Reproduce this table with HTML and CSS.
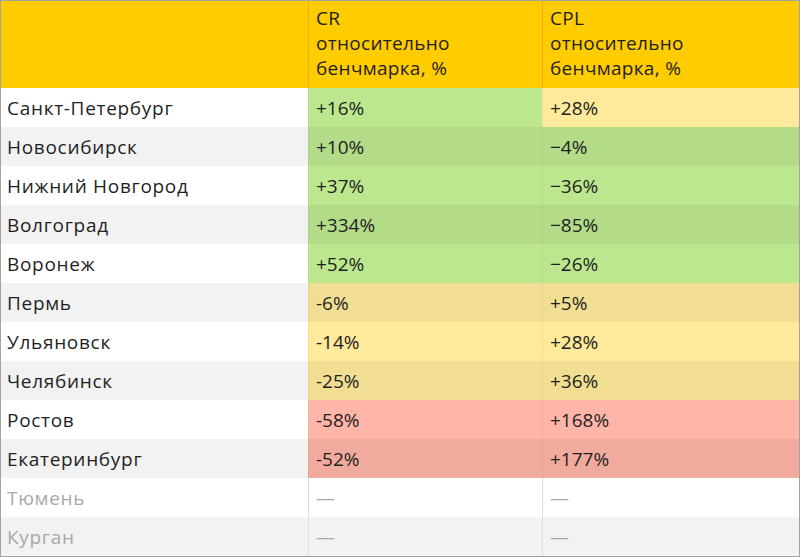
FILE: index.html
```html
<!DOCTYPE html>
<html lang="ru">
<head>
<meta charset="utf-8">
<link rel="stylesheet" href="styles.css">
</head>
<body>
<div class="frame">
  <div class="grid">
    <div class="cell head first"></div>
    <div class="cell head">CR<br>относительно<br>бенчмарка, %</div>
    <div class="cell head">CPL<br>относительно<br>бенчмарка, %</div>

    <div class="cell name">Санкт-Петербург</div>
    <div class="cell val green">+16%</div>
    <div class="cell val yellow">+28%</div>

    <div class="cell name alt">Новосибирск</div>
    <div class="cell val green alt">+10%</div>
    <div class="cell val green alt">−4%</div>

    <div class="cell name">Нижний Новгород</div>
    <div class="cell val green">+37%</div>
    <div class="cell val green">−36%</div>

    <div class="cell name alt">Волгоград</div>
    <div class="cell val green alt">+334%</div>
    <div class="cell val green alt">−85%</div>

    <div class="cell name">Воронеж</div>
    <div class="cell val green">+52%</div>
    <div class="cell val green">−26%</div>

    <div class="cell name alt">Пермь</div>
    <div class="cell val yellow alt">-6%</div>
    <div class="cell val yellow alt">+5%</div>

    <div class="cell name">Ульяновск</div>
    <div class="cell val yellow">-14%</div>
    <div class="cell val yellow">+28%</div>

    <div class="cell name alt">Челябинск</div>
    <div class="cell val yellow alt">-25%</div>
    <div class="cell val yellow alt">+36%</div>

    <div class="cell name">Ростов</div>
    <div class="cell val red">-58%</div>
    <div class="cell val red">+168%</div>

    <div class="cell name alt">Екатеринбург</div>
    <div class="cell val red alt">-52%</div>
    <div class="cell val red alt">+177%</div>

    <div class="cell name muted">Тюмень</div>
    <div class="cell val empty">—</div>
    <div class="cell val empty">—</div>

    <div class="cell name muted alt">Курган</div>
    <div class="cell val empty alt">—</div>
    <div class="cell val empty alt">—</div>
  </div>
</div>
</body>
</html>
```

FILE: styles.css
```css
html, body {
  margin: 0;
  padding: 0;
  background: #ffffff;
}

.frame {
  box-sizing: border-box;
  width: 800px;
  height: 557px;
  border: 1px solid #a3a3a3;
  font-family: "Open Sans", "Noto Sans", sans-serif;
  font-size: 19px;
  color: #1f1f1f;
}

.grid {
  display: grid;
  grid-template-columns: 307px 234px 257px;
  grid-template-rows: 87px repeat(12, 39px);
}

.cell {
  box-sizing: border-box;
  display: flex;
  align-items: center;
  padding-left: 7px;
  white-space: nowrap;
  background: #ffffff;
}

.cell.head {
  background: #ffcc00;
  display: block;
  padding-top: 5px;
  line-height: 25px;
  letter-spacing: 0.3px;
  border-left: 1px solid #e3b600;
}

.cell.head.first {
  border-left: none;
}

.cell.name {
  padding-left: 6px;
  letter-spacing: 0.7px;
}

.cell.val {
  border-left: 1px solid rgba(0, 0, 0, 0.04);
}

.cell.alt {
  background: #f2f2f2;
}

.cell.muted {
  color: #a8a8a8;
}

.cell.empty {
  color: #a8a8a8;
  border-left: 1px solid #dedede;
}

.cell.green { background: #bce78f; }
.cell.green.alt { background: #b3db88; }
.cell.yellow { background: #ffe99a; }
.cell.yellow.alt { background: #f2de93; }
.cell.red { background: #ffb5a7; }
.cell.red.alt { background: #f0ab9e; }
```
